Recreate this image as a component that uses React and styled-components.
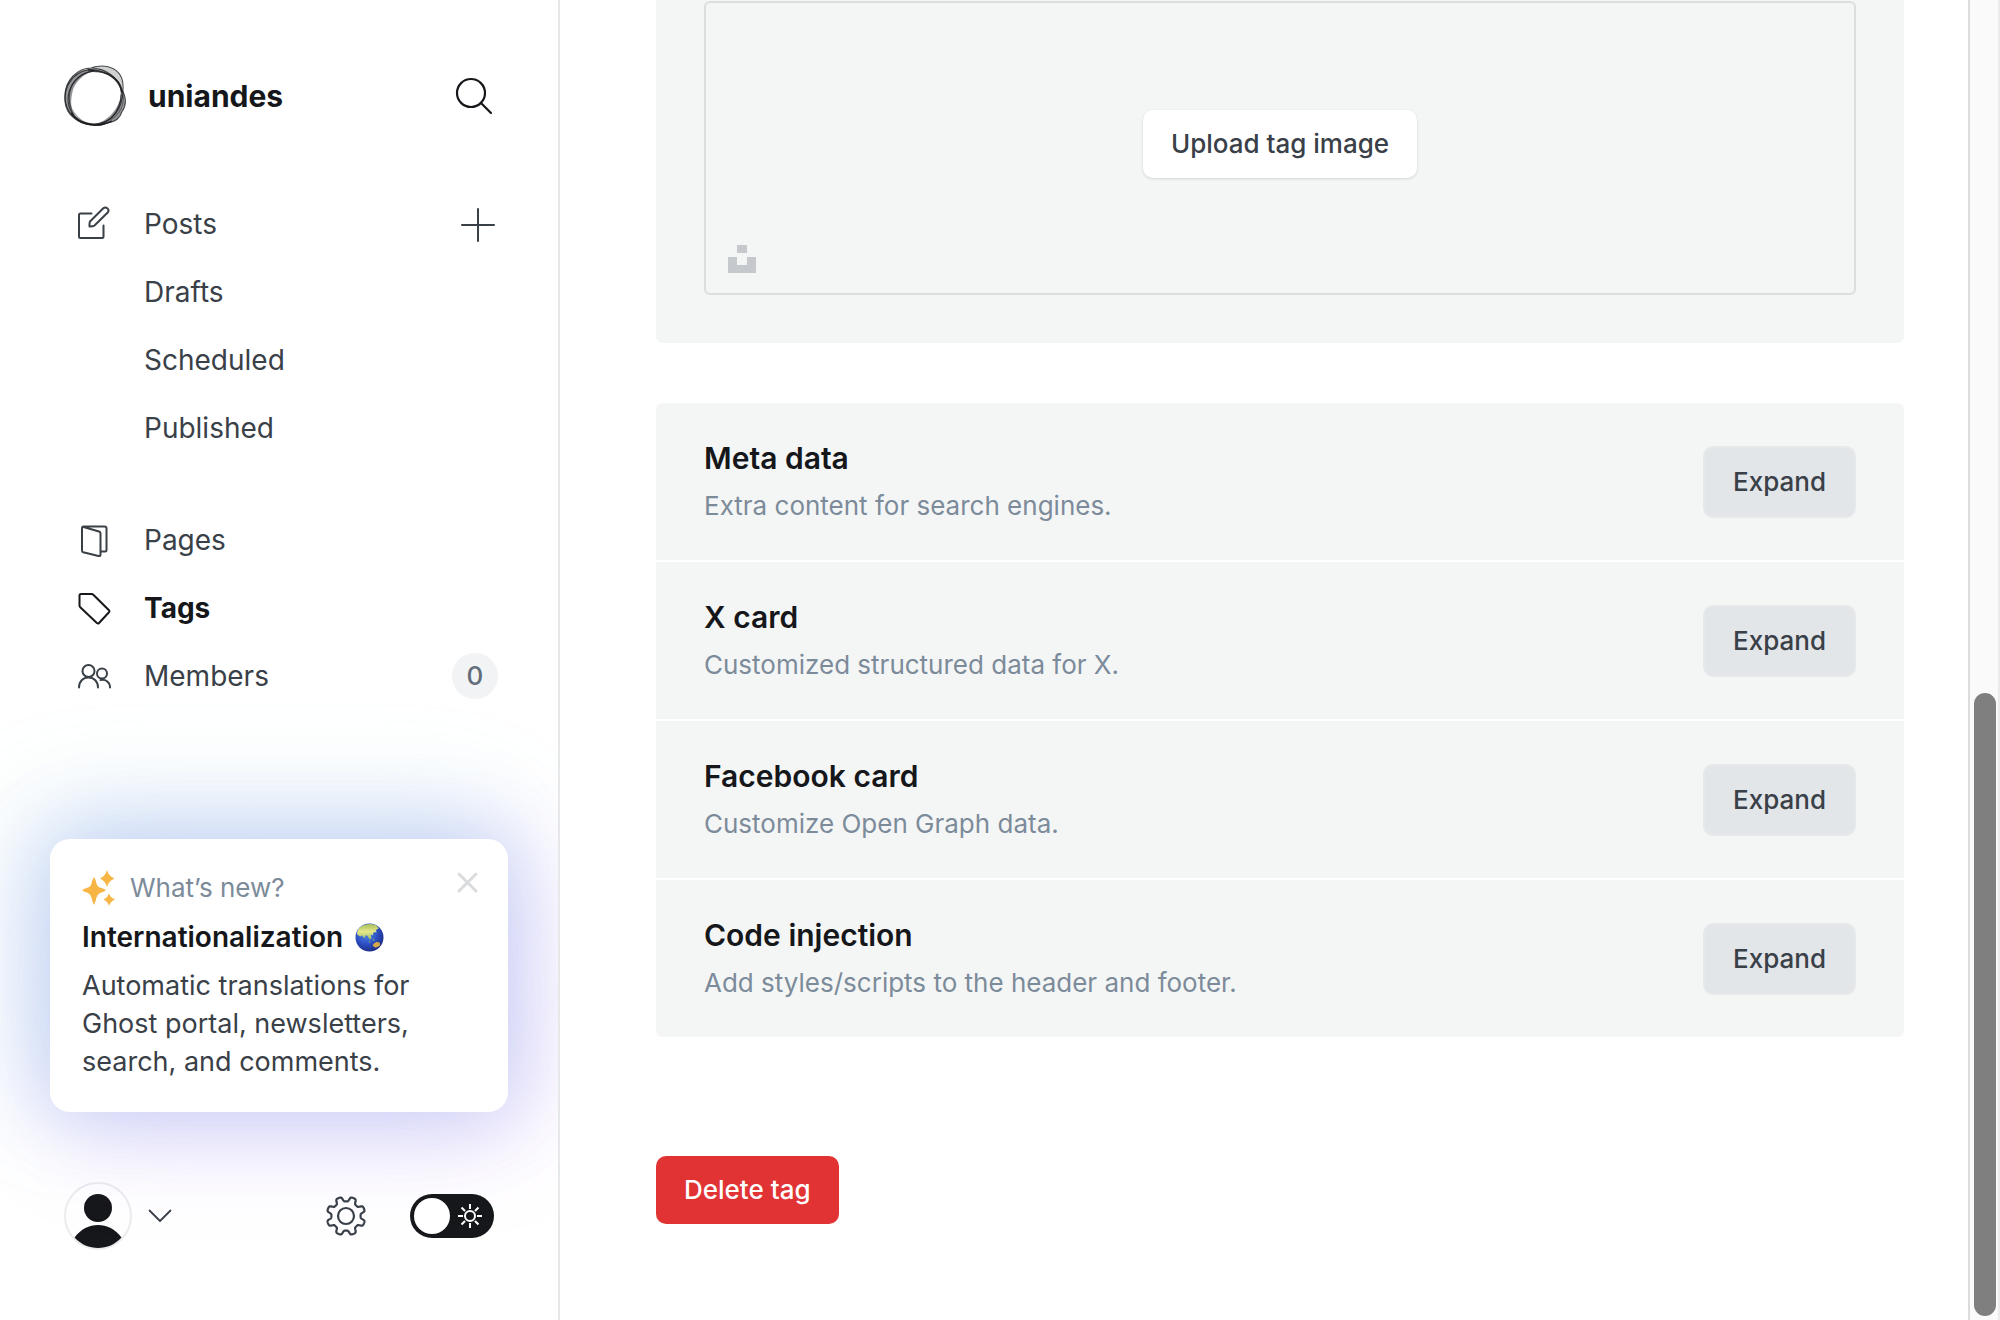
import React, { useState } from "react";
import styled, { createGlobalStyle, css } from "styled-components";

const GlobalStyle = createGlobalStyle`
  *, *::before, *::after { box-sizing: border-box; }
  body {
    margin: 0;
    background: #fff;
    color: #15171a;
    font-family: Inter, "Liberation Sans", sans-serif;
    font-size: 26px;
    line-height: 36px;
  }
  button, input { font: inherit; color: inherit; }
  h2, h3, p, ul { margin: 0; padding: 0; }
`;

const Page = styled.div`
  display: grid;
  grid-template-columns: 560px minmax(0, 1fr) 32px;
  height: 100vh;
  min-height: 1240px;
`;

const Sidebar = styled.aside`
  display: flex;
  flex-direction: column;
  border-right: 2px solid #e6e8ea;
  overflow: hidden;
`;

const BareButton = styled.button`
  display: flex;
  align-items: center;
  padding: 0;
  border: 0;
  background: none;
  cursor: pointer;
`;

const SiteHeader = styled.header`
  display: flex;
  align-items: center;
  gap: 22px;
  height: 60px;
  margin: 66px 64px 64px;
`;

const SiteName = styled.span`
  flex: 1;
  font-size: 30px;
  font-weight: 700;
`;

const Nav = styled.nav`
  display: flex;
  flex-direction: column;
  gap: 44px;
`;

const NavList = styled.ul`
  list-style: none;
`;

const NavItem = styled.li`
  display: flex;
  align-items: center;
  justify-content: space-between;
  height: 68px;
  padding: 0 60px 0 76px;
`;

const NavLink = styled.a`
  display: flex;
  align-items: center;
  gap: 32px;
  color: #394047;
  font-size: 28px;
  text-decoration: none;
  ${(p) => p.$nested && css`padding-left: 68px;`}
  ${(p) => p.$active && css`color: #15171a; font-weight: 700;`}
`;

const NavIcon = styled.svg`
  width: 36px;
  height: 36px;
  fill: none;
  stroke: currentColor;
  stroke-width: 2;
  stroke-linecap: round;
  stroke-linejoin: round;
`;

const AddButton = styled(BareButton)`
  padding-right: 2px;
  color: #394047;
`;

const Badge = styled.span`
  width: 46px;
  height: 46px;
  border-radius: 23px;
  background: #f1f3f4;
  color: #626d79;
  font-weight: 500;
  line-height: 46px;
  text-align: center;
`;

const NewsCard = styled.section`
  position: relative;
  margin: auto 50px 70px;
  padding: 31px 32px;
  border-radius: 20px;
  background: #fff;
  box-shadow:
    -16px -20px 110px 6px rgba(110, 210, 215, 0.22),
    16px 16px 110px 6px rgba(210, 120, 250, 0.2),
    0 0 80px 4px rgba(80, 110, 235, 0.24);
`;

const NewsLabel = styled.div`
  display: flex;
  align-items: center;
  gap: 14px;
  color: #7c8b9a;
`;

const NewsTitle = styled.h3`
  display: flex;
  align-items: center;
  gap: 12px;
  margin: 13px 0 12px;
  font-size: 28px;
  font-weight: 600;
  line-height: 36px;
`;

const NewsText = styled.p`
  color: #394047;
  font-size: 27px;
  line-height: 38px;
`;

const CloseButton = styled(BareButton)`
  position: absolute;
  top: 32px;
  right: 28px;
`;

const SidebarFooter = styled.footer`
  display: flex;
  align-items: center;
  margin: 0 64px 70px;
`;

const UserMenu = styled(BareButton)`
  gap: 16px;
  margin-right: auto;
`;

const SettingsLink = styled.a`
  display: flex;
  margin-right: 43px;
`;

const ThemeSwitch = styled.label`
  position: relative;
  display: flex;

  svg {
    position: absolute;
    top: 9px;
    right: 11px;
    pointer-events: none;
  }
`;

const SwitchInput = styled.input`
  appearance: none;
  width: 84px;
  height: 44px;
  margin: 0;
  padding: 4px;
  border-radius: 22px;
  background: #15171a;
  cursor: pointer;

  &::before {
    content: "";
    display: block;
    width: 36px;
    height: 36px;
    border-radius: 18px;
    background: #fff;
  }
`;

const Main = styled.main`
  position: relative;
  display: flex;
  flex-direction: column;
  align-items: stretch;
  padding: 0 64px 96px 96px;
  background: #fff;
`;

const ImagePanel = styled.section`
  padding: 1px 48px 48px;
  border-radius: 0 0 6px 6px;
  background: #f4f6f6;
`;

const Dropzone = styled.div`
  display: grid;
  grid-template-rows: 1fr auto 1fr;
  justify-items: center;
  height: 294px;
  padding: 20px 22px;
  border: 2px solid #dbdedf;
  border-radius: 6px;
`;

const Button = styled.button`
  padding: 16px 28px;
  border: 0;
  border-radius: 10px;
  font-weight: 500;
  cursor: pointer;
`;

const UploadButton = styled(Button)`
  grid-row: 2;
  margin-bottom: 8px;
  background: #fff;
  color: #394047;
  box-shadow: 0 1px 3px rgba(0, 0, 0, 0.14);
`;

const UnsplashButton = styled(BareButton)`
  grid-row: 3;
  align-self: end;
  justify-self: start;
`;

const SettingsPanel = styled.section`
  display: flex;
  flex-direction: column;
  gap: 2px;
  margin: 60px 0 119px;
  border-radius: 6px;
  overflow: hidden;
`;

const SettingRow = styled.div`
  display: flex;
  align-items: center;
  justify-content: space-between;
  padding: 37px 48px 36px;
  background: #f4f6f6;
`;

const SettingTitle = styled.h2`
  margin-bottom: 12px;
  font-size: 30px;
  font-weight: 600;
  line-height: 36px;
`;

const SettingHint = styled.p`
  color: #7c8b9a;
`;

const ExpandButton = styled(Button)`
  border: 2px solid #e6e8ea;
  background: #e2e6e9;
  color: #394047;
`;

const DeleteButton = styled(Button)`
  align-self: flex-start;
  background: #e13333;
  color: #fff;
`;

const ScrollTrack = styled.div`
  display: flex;
  flex-direction: column;
  justify-content: flex-end;
  padding: 4px 2px 4px 4px;
  border-left: 2px solid #dcdcdc;
  border-right: 2px solid #ebebeb;
  background: #fafafa;
`;

const ScrollThumb = styled.div`
  height: 47.5%;
  border-radius: 11px;
  background: #7f7f7f;
`;

function Logo() {
  return (
    <svg width="62" height="62" viewBox="0 0 61 61" fill="none" aria-hidden="true">
      <g fill="#15171a">
        <path fillOpacity=".2" d="M24 4C32 0 42 0 49 4C56 8 59 14 58 25C54 16 48 11 40 8C35 7 29 6 24 4Z" />
        <path fillOpacity=".45" d="M57 24C61 31 62 39 57 46C55 53 50 56 43 57C38 59 32 60 27 59C40 57 55 46 57 24Z" />
        <path fillOpacity=".45" d="M30 5C22 2 10 7 5 15C0 23 0 30 1 38C3 46 7 50 13 54C7 47 6 38 8 28C10 17 19 9 30 5Z" />
      </g>
      <g stroke="#15171a">
        <g strokeOpacity=".75" strokeWidth="1">
          <path d="M24 4C32 0 42 0 49 4C56 8 59 14 58 25C58 42 48 58 29 58C12 58 1 46 1 31C1 15 13 3 27 3C40 3 55 14 57 24" />
          <path d="M57 24C61 31 62 39 57 46C55 53 50 56 43 57C38 59 32 60 27 59C14 58 2 49 1 36C0 22 8 8 23 5" />
          <path d="M26 5C36 8 46 7 52 15C58 22 57 33 54 40C50 52 40 59 29 59C16 58 5 48 4 36C3 20 14 8 30 6" />
        </g>
        <g strokeOpacity=".45" strokeWidth="1">
          <path d="M34 4C45 6 55 15 58 28C60 38 55 49 46 54" />
          <path d="M56 29C57 42 48 55 34 58C18 60 5 47 5 31C6 18 17 7 30 6" />
          <path d="M10 49C2 38 4 20 14 12C20 7 26 5 33 7" />
        </g>
        <path strokeWidth="1.6" strokeOpacity=".85" d="M7 47C13 56 22 59 31 59C37 59 43 57 47 55M23 5C33 4 44 8 50 14C54 18 56 22 57 27" />
      </g>
    </svg>
  );
}

const cogPath = (() => {
  const points = [];
  for (let i = 0; i < 320; i += 1) {
    const t = (i / 320) * Math.PI * 2;
    const wave = Math.tanh(2.4 * Math.cos(8 * (t - Math.PI / 8))) / Math.tanh(2.4);
    const r = 17 + 2.4 * wave;
    points.push(`${(21 + r * Math.sin(t)).toFixed(2)} ${(21 - r * Math.cos(t)).toFixed(2)}`);
  }
  return `M${points.join("L")}Z`;
})();

const Cog = () => (
  <svg width="42" height="42" viewBox="0 0 42 42" fill="none" stroke="#394047" strokeWidth="2.200" aria-hidden="true">
    <path d={cogPath} strokeLinejoin="round" />
    <circle cx="21" cy="21" r="8" />
  </svg>
);

const Globe = () => (
  <svg width="29" height="29" viewBox="0 0 28 28" aria-label="Globe" role="img">
    <defs>
      <radialGradient id="sea" cx=".4" cy=".35" r=".7">
        <stop offset="0" stopColor="#4f8be8" />
        <stop offset=".55" stopColor="#2d50c4" />
        <stop offset="1" stopColor="#1b2a80" />
      </radialGradient>
      <linearGradient id="land" x1="0" y1="0" x2="0" y2="1">
        <stop offset="0" stopColor="#a9bf5b" />
        <stop offset=".5" stopColor="#e6e889" />
        <stop offset="1" stopColor="#9ab866" />
      </linearGradient>
    </defs>
    <circle cx="14" cy="14" r="13.5" fill="url(#sea)" />
    <path fill="url(#land)" d="M4 5C8 1 15 0 20 2L23 5L20 7L21 9L18 9L17 12L15 11L16 15L14 16L12 12L10 12L9 15L7 12L5 13L2 11C2 8 3 6 4 5Z" />
    <path fill="#d9a84b" d="M18 20L21 18L24 19L24 22L20 24L17 22Z" />
    <path fill="#94ba72" d="M13 17l2 1-1 1zM18 15l1 2-2 0z" />
  </svg>
);

const icons = {
  posts: <path d="M15.5 7.500H4.500Q3 7.500 3 9V30.500Q3 32 4.500 32H26Q27.500 32 27.500 30.500V19.500M14 15.500L27.300 2.300Q29.300 .500 31.500 2.400Q33.500 4.500 31.700 6.500L18.500 19.500Q17.300 20.500 13.500 20.500Q13.300 17 14 15.500Z" />,
  pages: <path d="M7.500 4.500H28.500Q30.500 4.500 30.500 6.500V28Q30.500 29.500 29 29.500H25M7.500 4.500Q6 4.500 6 6.500V28.500Q6 29.800 7.200 30.200L22.500 34Q24.500 34.500 24.500 32.500V11.500Q24.500 10 23 9.500L7.500 5" />,
  tags: <path d="M5 4H15.500Q16.500 4 17.300 4.800L33 20.200Q34 21.300 33 22.300L23 33Q22 34 20.900 33L4.500 17.500Q3.500 16.600 3.500 15.500V5.500Q3.500 4 5 4Z" />,
  members: (
    <>
      <circle cx="12.500" cy="13" r="6" />
      <path d="M3 29.500C3 23.500 7 19.500 12.500 19.500S22 23.500 22 29.500" />
      <circle cx="26" cy="15.500" r="5" />
      <path d="M24.500 22C30 21 34 24.500 34 29.500" />
    </>
  ),
};

const contentLinks = [
  { label: "Posts", icon: "posts", add: true },
  { label: "Drafts" },
  { label: "Scheduled" },
  { label: "Published" },
];

const siteLinks = [
  { label: "Pages", icon: "pages" },
  { label: "Tags", icon: "tags", active: true },
  { label: "Members", icon: "members", count: 0 },
];

const settings = [
  { title: "Meta data", hint: "Extra content for search engines." },
  { title: "X card", hint: "Customized structured data for X." },
  { title: "Facebook card", hint: "Customize Open Graph data." },
  { title: "Code injection", hint: "Add styles/scripts to the header and footer." },
];

function NavGroup({ links }) {
  return (
    <NavList>
      {links.map(({ label, icon, active, add, count }) => (
        <NavItem key={label}>
          <NavLink href="#" $nested={!icon} $active={active}>
            {icon && <NavIcon viewBox="0 0 36 36" aria-hidden="true">{icons[icon]}</NavIcon>}
            {label}
          </NavLink>
          {add && (
            <AddButton type="button" aria-label="New post">
              <svg width="36" height="36" viewBox="0 0 36 36" stroke="currentColor" strokeWidth="2" strokeLinecap="round">
                <path d="M18 3V35M2 19H34" />
              </svg>
            </AddButton>
          )}
          {count !== undefined && <Badge>{count}</Badge>}
        </NavItem>
      ))}
    </NavList>
  );
}

function ThemeToggle() {
  const [dark, setDark] = useState(false);
  return (
    <ThemeSwitch>
      <SwitchInput type="checkbox" aria-label="Night mode" checked={dark} onChange={() => setDark(!dark)} />
      <svg width="26" height="26" viewBox="0 0 26 26" fill="none" stroke="#fff" strokeWidth="2">
        <circle cx="13" cy="13" r="5" />
        <path d="M13 1V6M13 20V25M1 13H6M20 13H25M4.500 4.500L8 8M18 18L21.500 21.500M4.500 21.500L8 18M18 8L21.500 4.500" />
      </svg>
    </ThemeSwitch>
  );
}

export default function App() {
  return (
    <>
      <GlobalStyle />
      <Page>
        <Sidebar>
          <SiteHeader>
            <Logo />
            <SiteName>uniandes</SiteName>
            <BareButton type="button" aria-label="Search">
              <svg width="40" height="40" viewBox="0 0 40 40" fill="none" stroke="#15171a" strokeWidth="2.200" strokeLinecap="round">
                <circle cx="17" cy="17" r="14" />
                <path d="M27 27L37 37" />
              </svg>
            </BareButton>
          </SiteHeader>

          <Nav>
            <NavGroup links={contentLinks} />
            <NavGroup links={siteLinks} />
          </Nav>

          <NewsCard>
            <NewsLabel>
              <svg width="34" height="36" viewBox="0 0 34 36" fill="#f6b545" aria-hidden="true">
                <path d="M12 7Q13.500 9 14.500 13.500Q15.500 17 18 17.500Q22 18.500 24 20Q22 22 18 23Q15.500 24 14.500 27.500Q13.500 32 12 35Q10.500 32 9.500 27.500Q8.500 24 6 23Q2 22 0 20Q2 18.500 6 17.500Q8.500 17 9.500 13.500Q10.500 9 12 7Z" />
                <path d="M25 0Q26.500 6 32.500 8.500Q26.500 11 25 17Q23.500 11 18 8.500Q23.500 6 25 0Z" />
                <path d="M27 23Q28 27.500 33 29.500Q28 31.500 27 36Q26 31.500 21.500 29.500Q26 27.500 27 23Z" />
              </svg>
              What’s new?
            </NewsLabel>
            <NewsTitle>Internationalization <Globe /></NewsTitle>
            <NewsText>Automatic translations for Ghost portal, newsletters, search, and comments.</NewsText>
            <CloseButton type="button" aria-label="Dismiss">
              <svg width="24" height="24" viewBox="0 0 24 24" stroke="#d9dbdd" strokeWidth="3" strokeLinecap="round">
                <path d="M3 3L20 20M20 3L3 20" />
              </svg>
            </CloseButton>
          </NewsCard>

          <SidebarFooter>
            <UserMenu type="button" aria-label="Account menu">
              <svg width="68" height="68" viewBox="0 0 68 68" aria-hidden="true">
                <circle cx="34" cy="34" r="33" fill="#fff" stroke="#ececee" strokeWidth="2" />
                <circle cx="34" cy="26" r="14" fill="#15171a" />
                <path fill="#15171a" d="M10.500 55.500C17 47 25 43 34 43S51 47 57.500 55.500C51 62.500 43 66 34 66S17 62.500 10.500 55.500Z" />
              </svg>
              <svg width="24" height="14" viewBox="0 0 24 14" fill="none" stroke="#394047" strokeWidth="1.800" strokeLinecap="round" strokeLinejoin="round">
                <path d="M1.500 1.500L12 12L22.500 1.500" />
              </svg>
            </UserMenu>
            <SettingsLink href="#" aria-label="Settings"><Cog /></SettingsLink>
            <ThemeToggle />
          </SidebarFooter>
        </Sidebar>

        <Main>
          <ImagePanel>
            <Dropzone>
              <UploadButton type="button">Upload tag image</UploadButton>
              <UnsplashButton type="button" aria-label="Unsplash">
                <svg width="28" height="28" viewBox="0 0 28 28" fill="#c5c9cd">
                  <path d="M9 0H19V8H9ZM0 12H9V20H19V12H28V28H0Z" />
                </svg>
              </UnsplashButton>
            </Dropzone>
          </ImagePanel>

          <SettingsPanel>
            {settings.map(({ title, hint }) => (
              <SettingRow key={title}>
                <div>
                  <SettingTitle>{title}</SettingTitle>
                  <SettingHint>{hint}</SettingHint>
                </div>
                <ExpandButton type="button">Expand</ExpandButton>
              </SettingRow>
            ))}
          </SettingsPanel>

          <DeleteButton type="button">Delete tag</DeleteButton>
        </Main>

        <ScrollTrack>
          <ScrollThumb />
        </ScrollTrack>
      </Page>
    </>
  );
}
